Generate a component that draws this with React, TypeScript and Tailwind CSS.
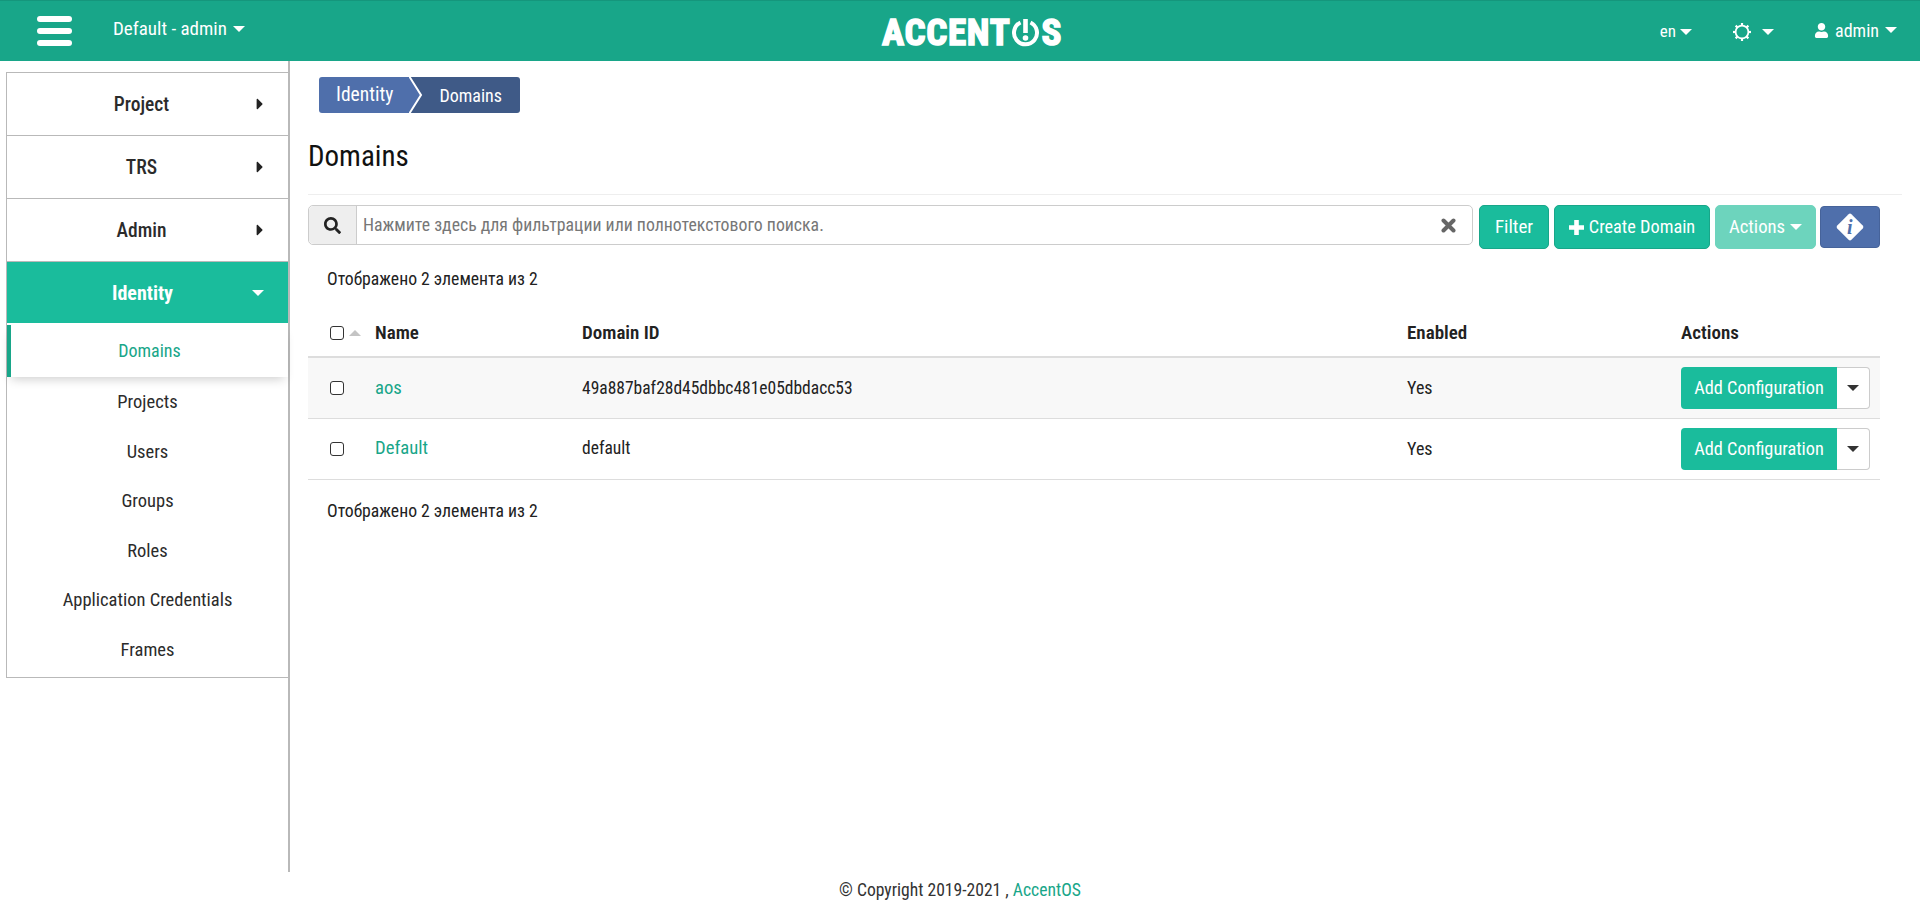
import { FaCaretRight, FaSearch, FaUser } from 'react-icons/fa'

const topMenu = ['Project', 'TRS', 'Admin']
const subMenu = ['Projects', 'Users', 'Groups', 'Roles', 'Application Credentials', 'Frames']
const rows = [
  { name: 'aos', id: '49a887baf28d45dbbc481e05dbdacc53', striped: true },
  { name: 'Default', id: 'default', striped: false },
]

function Caret({ className = 'border-t-white' }: { className?: string }) {
  return <span className={`inline-block w-0 h-0 border-x-[6px] border-t-[6px] border-x-transparent ${className}`} />
}

function Logo() {
  return (
    <div className="flex items-center text-white font-bold text-[37px] leading-none tracking-[0.7px] [-webkit-text-stroke:1.5px_white]">
      <span>ACCENT</span>
      <svg width="29" height="29" viewBox="0 0 29 29" className="mx-[1px]">
        <path d="M9.5 4.5 A11.5 11.5 0 1 0 19.5 4.5" fill="none" stroke="white" strokeWidth="4" />
        <rect x="12.2" y="1" width="4.6" height="14" fill="white" />
        <circle cx="14.5" cy="20" r="2.8" fill="white" />
      </svg>
      <span>S</span>
    </div>
  )
}

function SunIcon() {
  const teeth = [0, 45, 90, 135, 180, 225, 270, 315]
  return (
    <svg width="18" height="18" viewBox="0 0 18 18">
      <circle cx="9" cy="9" r="6.4" fill="none" stroke="white" strokeWidth="1.8" />
      {teeth.map((deg) => (
        <rect key={deg} x="7.9" y="0" width="2.2" height="2.6" fill="white" transform={`rotate(${deg} 9 9)`} />
      ))}
    </svg>
  )
}

function Header() {
  return (
    <header className="h-[61px] shrink-0 bg-[#18a689] border-t border-[#15967c] flex items-center text-white relative">
      <div className="w-[37px]" />
      <div className="w-[35px] flex flex-col gap-[6px]">
        <span className="h-[6px] rounded-[3px] bg-white" />
        <span className="h-[6px] rounded-[3px] bg-white" />
        <span className="h-[6px] rounded-[3px] bg-white" />
      </div>
      <div className="ml-[41px] flex items-center gap-[6px] text-[19px] mb-[4px]">
        <span>Default - admin</span>
        <Caret />
      </div>
      <div className="absolute left-[882px] top-[13px]">
        <Logo />
      </div>
      <div className="ml-auto flex items-center text-[17px]">
        <span className="flex items-center gap-[4px] mt-[2px]">
          en <Caret />
        </span>
        <span className="ml-[41px] flex items-center gap-[11px] mt-[1px]">
          <SunIcon />
          <Caret />
        </span>
        <span className="ml-[40px] flex items-center gap-[6px] text-[18px] mr-[23px] mb-[2px]">
          <FaUser size={15} />
          admin
          <Caret />
        </span>
      </div>
    </header>
  )
}

function Sidebar() {
  return (
    <aside className="w-[290px] shrink-0 border-r-2 border-[#b9b9b9] pt-[11px] pl-[6px]">
      <nav className="border border-r-0 border-[#b9b9b9] text-[18.5px] text-[#2b2b2b]">
        {topMenu.map((item) => (
          <div key={item} className="h-[63px] border-b border-[#b9b9b9] flex items-center relative">
            <span className="w-[269px] pt-[1px] text-center text-[19.5px] font-medium">{item}</span>
            <FaCaretRight size={18} className="absolute left-[244px] text-[#222]" />
          </div>
        ))}
        <div className="h-[61px] bg-[#1abc9c] text-white font-bold flex items-center relative">
          <span className="w-[271px] text-center text-[20px]">Identity</span>
          <Caret className="absolute left-[245px] border-t-white" />
        </div>
        <div className="h-[52px] mt-[2px] pb-[2px] border-l-4 border-[#18a689] flex items-center justify-center text-[#18a689] text-[18px] shadow-[0_6px_10px_-4px_rgba(0,0,0,0.2)]">
          Domains
        </div>
        <div className="pt-[1px] pb-[1px]">
          {subMenu.map((item) => (
            <div key={item} className="h-[49.6px] flex items-center justify-center">
              {item}
            </div>
          ))}
        </div>
      </nav>
    </aside>
  )
}

function Breadcrumb() {
  return (
    <div className="flex h-[36px] w-[201px] text-white text-[18px]">
      <div className="w-[90px] bg-[#4f6fab] rounded-l-[3px] flex items-center pl-[17px] relative text-[19.5px]">
        Identity
        <svg width="14" height="36" viewBox="0 0 14 36" className="absolute left-[90px] top-0 z-10">
          <path d="M0 0 L13 18 L0 36 Z" fill="#4f6fab" />
          <path d="M0 -1 L12 18 L0 37" fill="none" stroke="white" strokeWidth="2" />
        </svg>
      </div>
      <div className="flex-1 bg-[#3f5a87] rounded-r-[3px] flex items-center justify-end pr-[18px]">Domains</div>
    </div>
  )
}

function Toolbar() {
  return (
    <div className="flex items-start">
      <div className="w-[1165px] h-[40px] flex border border-[#ccc] rounded-[5px] bg-white">
        <div className="w-[48px] flex items-center justify-center bg-[#eee] border-r border-[#ccc] rounded-l-[5px] text-[#222]">
          <FaSearch size={17} />
        </div>
        <div className="flex-1 flex items-center pl-[6px] text-[17.8px] text-[#777]">
          Нажмите здесь для фильтрации или полнотекстового поиска.
        </div>
        <div className="w-[31px] flex items-center">
          <svg width="15" height="15" viewBox="0 0 15 15">
            <path d="M2.5 2.5 L12.5 12.5 M12.5 2.5 L2.5 12.5" stroke="#666" strokeWidth="4" strokeLinecap="round" />
          </svg>
        </div>
      </div>
      <button className="ml-[6px] w-[70px] h-[44px] rounded-[5px] bg-[#1abc9c] border border-[#18a689] text-white text-[19px]">
        Filter
      </button>
      <button className="ml-[5px] w-[156px] h-[44px] rounded-[5px] bg-[#1abc9c] border border-[#18a689] text-white text-[18.3px] flex items-center justify-center gap-[5px]">
        <svg width="15" height="15" viewBox="0 0 15 15">
          <path d="M7.5 0 V15 M0 7.5 H15" stroke="white" strokeWidth="4.6" />
        </svg>
        Create Domain
      </button>
      <button className="ml-[5px] w-[101px] h-[44px] rounded-[5px] bg-[#6dd4bd] border border-[#6dd4bd] text-white text-[18.7px] flex items-center justify-center gap-[5px]">
        Actions
        <Caret />
      </button>
      <button className="ml-[4px] mt-[1px] w-[60px] h-[42px] rounded-[4px] bg-[#4f6fab] border border-[#46639a] flex items-center justify-center">
        <span className="w-[20px] h-[20px] rotate-45 bg-white rounded-[2px] flex items-center justify-center">
          <span className="-rotate-45 font-bold italic text-[20px] leading-none text-[#4f6fab] font-['Liberation_Serif',serif]">i</span>
        </span>
      </button>
    </div>
  )
}

function Checkbox() {
  return <span className="block w-[14px] h-[14px] border-[1.5px] border-[#333] rounded-[3px] bg-white" />
}

function DomainsTable() {
  return (
    <table className="w-[1572px] table-fixed border-collapse text-[18px] text-[#222]">
      <colgroup>
        <col className="w-[54px]" />
        <col className="w-[207px]" />
        <col className="w-[825px]" />
        <col className="w-[274px]" />
        <col className="w-[212px]" />
      </colgroup>
      <thead>
        <tr className="h-[50px] border-b-2 border-[#ddd] font-semibold text-left text-[19px]">
          <th className="pl-[22px] pt-[2px]">
            <div className="flex items-center gap-[5px]">
              <Checkbox />
              <span className="w-0 h-0 border-x-[6px] border-b-[6px] border-x-transparent border-b-[#c4c4c4]" />
            </div>
          </th>
          <th className="pl-[13px] pt-[4px] font-semibold">Name</th>
          <th className="pl-[13px] pt-[4px] font-semibold">Domain ID</th>
          <th className="pl-[13px] pt-[4px] font-semibold">Enabled</th>
          <th className="pl-[13px] pt-[4px] font-semibold">Actions</th>
        </tr>
      </thead>
      <tbody>
        {rows.map((row) => (
          <tr key={row.name} className={`h-[61px] border-b border-[#ddd] ${row.striped ? 'bg-[#f8f8f8]' : ''}`}>
            <td className="pl-[22px]">
              <Checkbox />
            </td>
            <td className="pl-[13px] text-[#18a689] text-[18.7px]">{row.name}</td>
            <td className="pl-[13px] text-[17.5px]">{row.id}</td>
            <td className="pl-[13px]">Yes</td>
            <td className="pl-[13px]">
              <div className="flex h-[42px] w-[189px]">
                <button className="w-[156px] rounded-l-[4px] bg-[#1abc9c] text-white text-[18.3px]">Add Configuration</button>
                <span className="flex-1 flex items-center justify-center bg-white border border-l-0 border-[#ccc] rounded-r-[4px]">
                  <Caret className="border-t-[#333]" />
                </span>
              </div>
            </td>
          </tr>
        ))}
      </tbody>
    </table>
  )
}

export default function App() {
  return (
    <div className="min-h-screen flex flex-col bg-white text-[#222] font-['Liberation_Sans_Narrow','Roboto_Condensed','Liberation_Sans',sans-serif]">
      <Header />
      <div className="flex-1 flex">
        <Sidebar />
        <main className="flex-1 pl-[18px] pr-[18px] pt-[16px]">
          <div className="ml-[11px]">
            <Breadcrumb />
          </div>
          <h1 className="text-[29px] leading-none mt-[29px] text-[#111]">Domains</h1>
          <div className="mt-[23px] h-[1px] bg-[#eee]" />
          <div className="mt-[10px]">
            <Toolbar />
          </div>
          <p className="ml-[19px] mt-[20px] text-[17.7px] leading-[20px]">Отображено 2 элемента из 2</p>
          <div className="mt-[18px]">
            <DomainsTable />
          </div>
          <p className="ml-[19px] mt-[21px] text-[17.7px] leading-[20px]">Отображено 2 элемента из 2</p>
        </main>
      </div>
      <footer className="h-[33px] shrink-0 flex items-center justify-center pt-[3px] text-[17.6px] text-[#333]">
        © Copyright 2019-2021 ,&nbsp;<span className="text-[#18a689]">AccentOS</span>
      </footer>
    </div>
  )
}
